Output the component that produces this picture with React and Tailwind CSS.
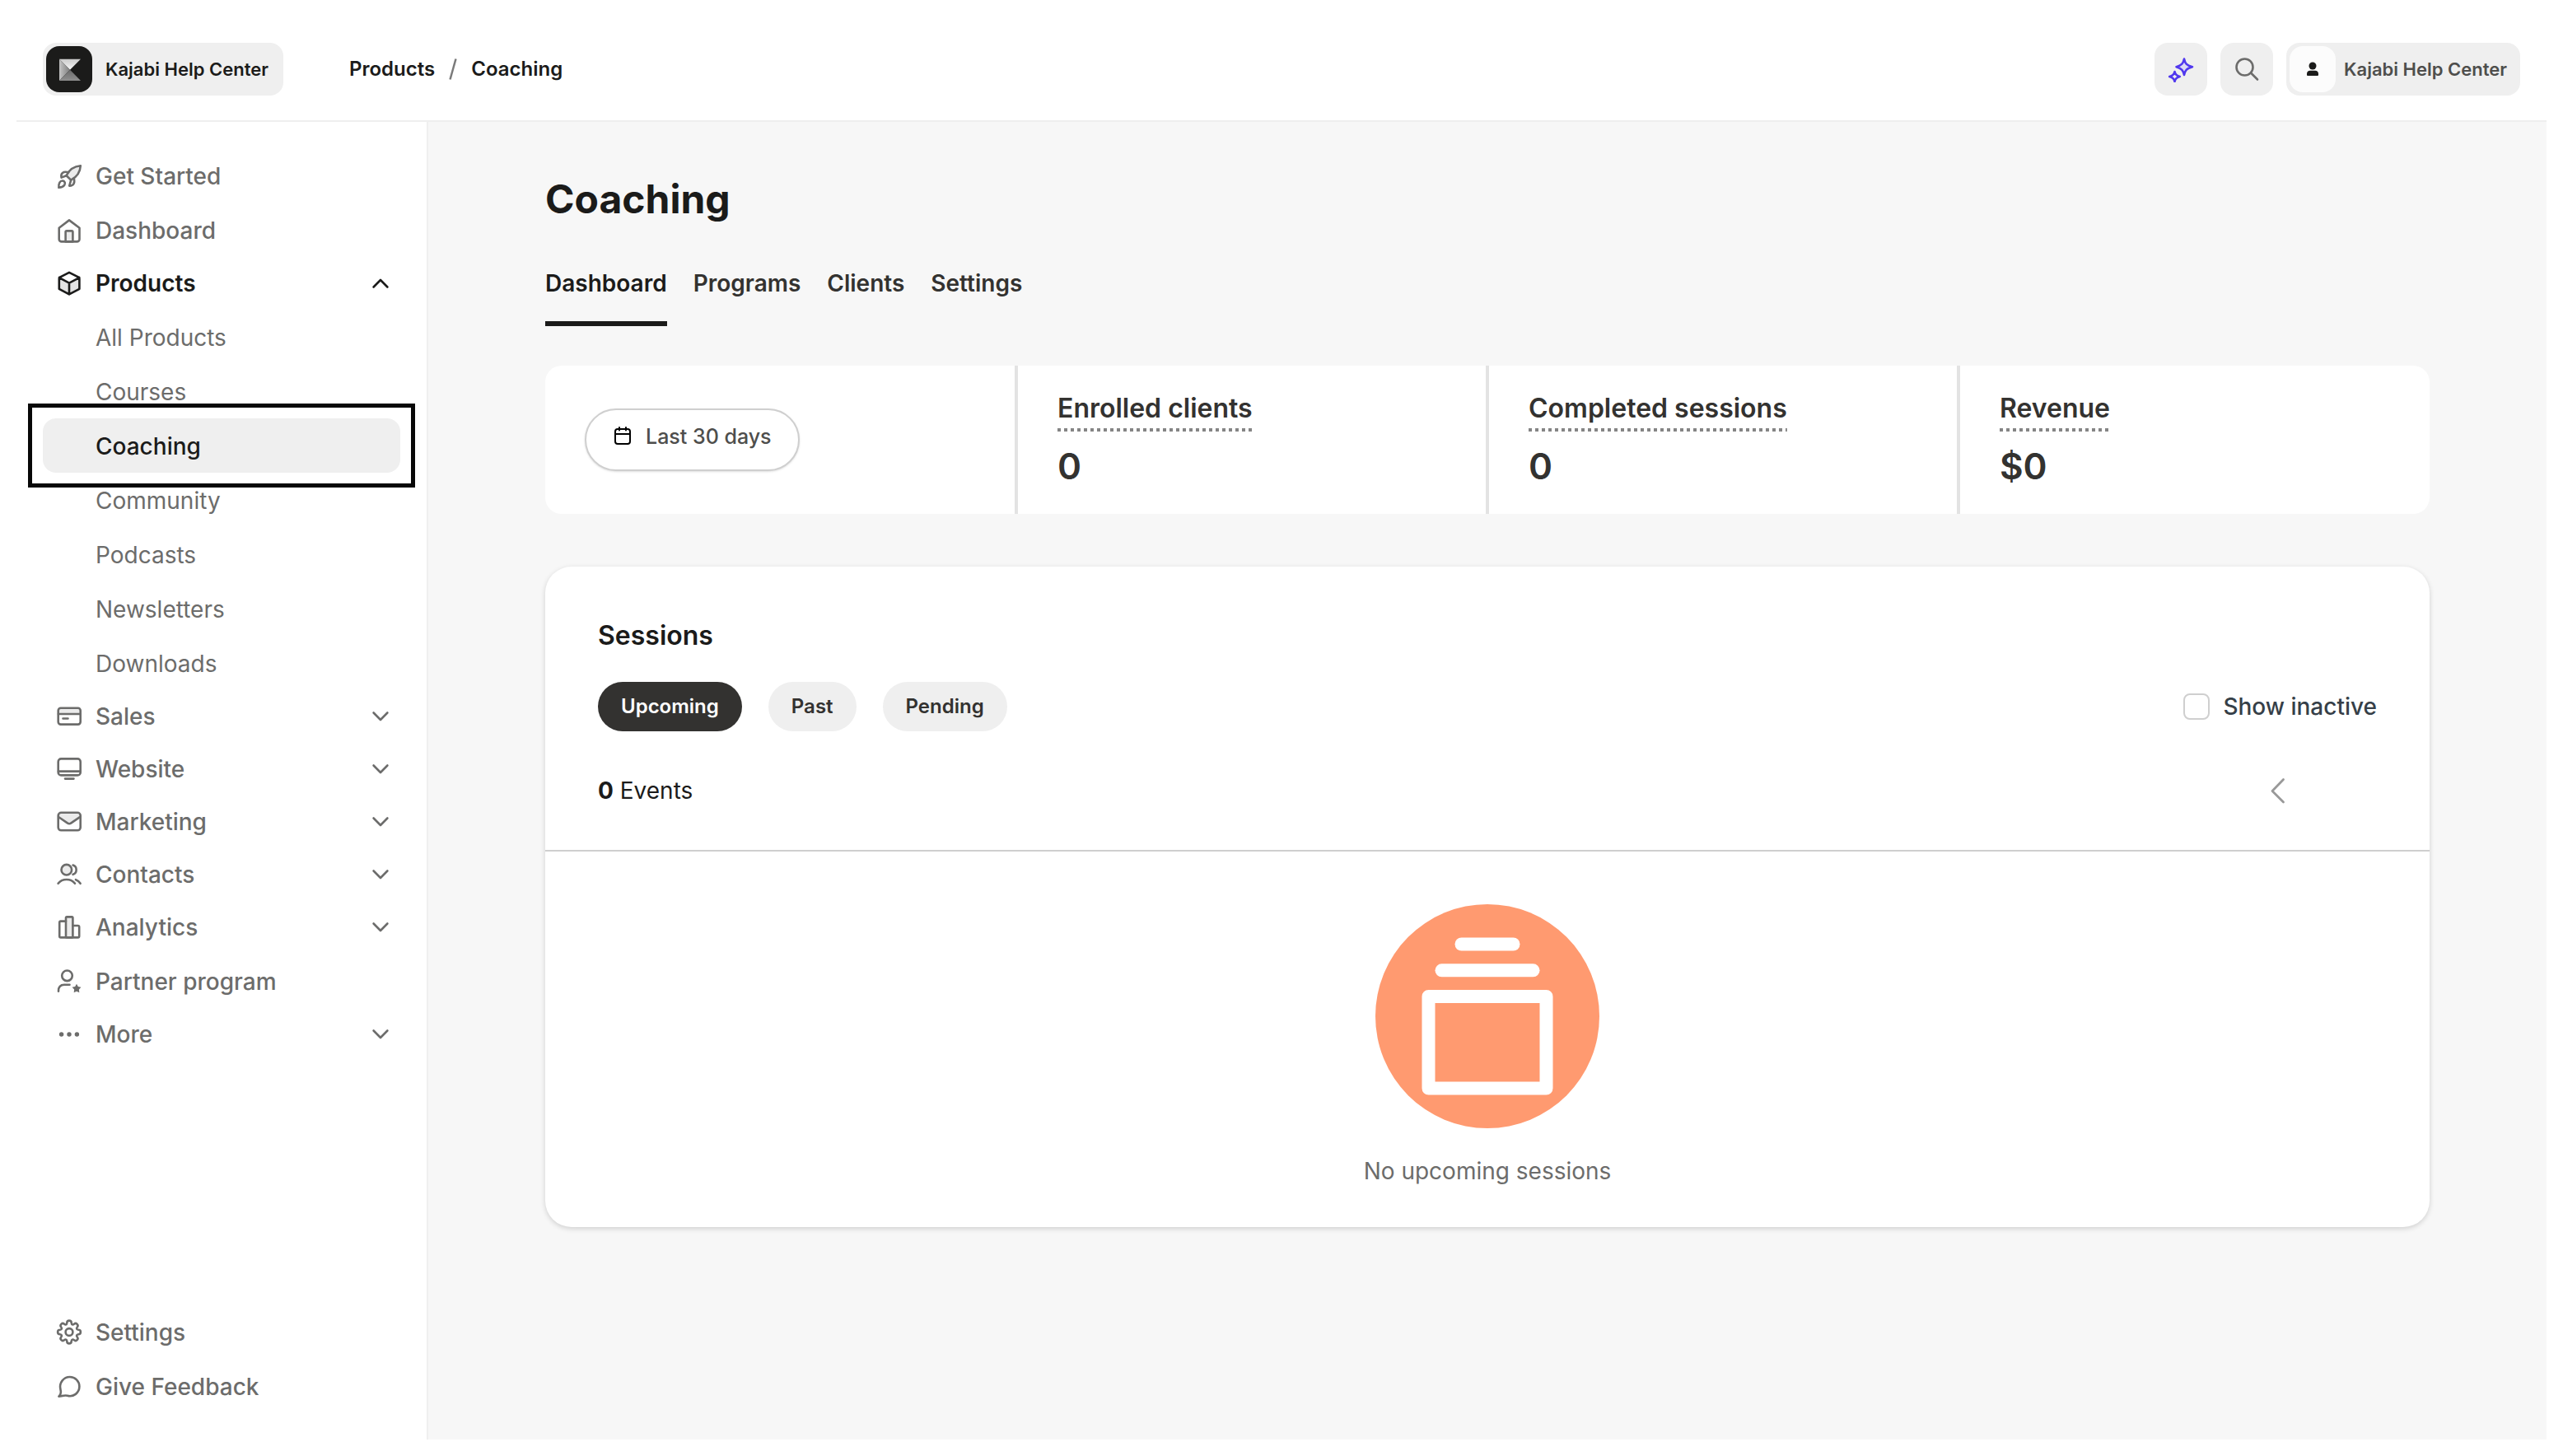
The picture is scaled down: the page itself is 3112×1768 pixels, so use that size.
import React, { useState } from "react";

function Icon({ children, className = "" }) {
  return (
    <svg
      viewBox="0 0 32 32"
      aria-hidden="true"
      className={`size-8 shrink-0 ${className}`}
      fill="none"
      stroke="currentColor"
      strokeWidth="2.6"
      strokeLinecap="round"
      strokeLinejoin="round"
    >
      {children}
    </svg>
  );
}

const TINT = "#ebebeb";

const icons = {
  rocket: (
    <Icon>
      <path d="M12.6 15.2C16 8.2 21.600 3.800 29.800 3.200C29.400 11.400 25.200 16.800 18.200 20.600Z" fill={TINT} />
      <path d="M12.600 15.200L6.600 17.600C5.400 12.600 8.400 9.600 15.200 11.200" />
      <path d="M18.200 20.600L16.200 27.600C21.200 27.800 23.200 24.600 21.800 18.400" />
      <path d="M3.400 29.800C3 24.600 4.800 21.200 8.400 21.600C10.800 22.200 11.600 24.600 10.200 26.800C8.800 28.800 6.400 29.600 3.400 29.800Z" />
    </Icon>
  ),
  home: (
    <Icon>
      <path d="M11.600 29.400V17.800a1.400 1.400 0 0 1 1.400-1.400h6a1.400 1.400 0 0 1 1.400 1.400V29.400Z" fill={TINT} />
      <path d="M3.700 12.800L16 3.400L28.500 12.800V26.400a3 3 0 0 1-3 3H6.700a3 3 0 0 1-3-3Z" />
    </Icon>
  ),
  box: (
    <Icon>
      <path d="M3.800 9.600L16 16V29.400L3.800 23Z M28.400 9.600L16 16V29.400L28.400 23Z" fill="#e3e3e3" stroke="none" />
      <path d="M16 2.800L28.400 9.200V22.800L16 29.400L3.800 22.800V9.200Z M3.800 9.200L16 15.600L28.400 9.200M16 15.600V29.400" />
    </Icon>
  ),
  card: (
    <Icon>
      <path d="M3 13V8.500a2.500 2.500 0 0 1 2.500-2.500h22a2.500 2.500 0 0 1 2.500 2.500V13Z" fill={TINT} stroke="none" />
      <rect x="2.700" y="5.800" width="27" height="19.800" rx="3" />
      <path d="M3 13H29.500M8.500 18.500H14.500" />
    </Icon>
  ),
  monitor: (
    <Icon>
      <rect x="2.700" y="3.400" width="27" height="20" rx="3.500" />
      <path d="M3 18.600H29.500M11 27.600H21.500" />
    </Icon>
  ),
  mail: (
    <Icon>
      <path d="M3.500 9.500V8a3 3 0 0 1 3-3h19a3 3 0 0 1 3 3v1.500L18 17.500a3.500 3.500 0 0 1-4 0Z" fill={TINT} stroke="none" />
      <rect x="2.700" y="4.800" width="27" height="21.500" rx="3.500" />
      <path d="M3.400 10.200L13.800 17.400a4 4 0 0 0 4.600 0L29 10.200" />
    </Icon>
  ),
  people: (
    <Icon>
      <circle cx="12.800" cy="10.200" r="6.300" fill={TINT} />
      <path d="M2.600 26.800C7.600 20.400 18 20.400 23 26.800M20.600 4.600C26 6.400 26 14 20.600 15.800M24 22.200C26.400 23 28.200 24.600 29.600 26.800" />
    </Icon>
  ),
  bars: (
    <Icon>
      <rect x="12" y="3.400" width="8.400" height="25" rx="1.200" fill={TINT} />
      <path d="M12 8.600H5.800A1.600 1.600 0 0 0 4.200 10.200V26.800A1.600 1.600 0 0 0 5.800 28.400H26.600A1.600 1.600 0 0 0 28.200 26.800V15.600A1.600 1.600 0 0 0 26.600 14H20.400" />
    </Icon>
  ),
  partner: (
    <Icon>
      <circle cx="13.500" cy="8.800" r="6.300" />
      <path d="M3 27.600C2.600 22.600 5.400 19.800 10 19.800H16.500" />
      <path d="M25 18.800L26.800 22L30.400 22.800L27.900 25.500L28.300 29.300L25 27.800L21.700 29.300L22.100 25.500L19.600 22.800L23.200 22Z" fill="currentColor" stroke="none" />
    </Icon>
  ),
  dots: (
    <Icon>
      <g fill="currentColor" stroke="none">
        <circle cx="6.600" cy="16" r="2.700" />
        <circle cx="16" cy="16" r="2.700" />
        <circle cx="25.400" cy="16" r="2.700" />
      </g>
    </Icon>
  ),
  gear: (
    <Icon>
      <circle cx="16" cy="15.500" r="4.400" />
      <path d="M13.300 4.300A2.700 2.700 0 0 1 18.700 4.300C19 6.600 20.400 7 22 5.700A2.700 2.700 0 0 1 25.800 9.500C24.500 11.100 24.900 12.500 27.200 12.800A2.700 2.700 0 0 1 27.200 18.200C24.900 18.500 24.500 19.900 25.800 21.500A2.700 2.700 0 0 1 22 25.300C20.400 24 19 24.400 18.700 26.700A2.700 2.700 0 0 1 13.300 26.700C13 24.400 11.600 24 10 25.300A2.700 2.700 0 0 1 6.200 21.500C7.500 19.900 7.100 18.500 4.800 18.200A2.700 2.700 0 0 1 4.800 12.800C7.100 12.500 7.500 11.100 6.200 9.500A2.700 2.700 0 0 1 10 5.700C11.600 7 13 6.600 13.300 4.300Z" />
    </Icon>
  ),
  chat: (
    <Icon>
      <path d="M3.400 27.600C5.600 25.600 6.400 22.600 5.400 18.800C3.600 11.400 9 4 16.800 4C23.200 4 28.400 9 28.400 15.600C28.400 23.400 21.200 28.800 13.800 26.800C10.600 26 7 27.200 3.400 27.600Z" />
    </Icon>
  ),
};

function Chevron({ up }) {
  return (
    <svg
      viewBox="0 0 24 24"
      aria-hidden="true"
      className="ml-auto size-6 shrink-0"
      fill="none"
      stroke="currentColor"
      strokeWidth="2.6"
      strokeLinecap="round"
      strokeLinejoin="round"
    >
      <path d={up ? "M3.600 16.500L12 8L20.400 16.500" : "M3.600 7.500L12 16L20.400 7.500"} />
    </svg>
  );
}

const rowBase = "flex w-full items-center gap-4 rounded-2xl pl-4 pr-3 text-left text-[28px] leading-8";

function NavLink({ icon, label }) {
  return (
    <a href="#" className={`${rowBase} h-[66px] pt-0.5 font-medium`}>
      {icons[icon]}
      {label}
    </a>
  );
}

function NavGroup({ icon, label, open }) {
  return (
    <button
      type="button"
      aria-expanded={!!open}
      className={`${rowBase} h-16 ${open ? "font-semibold text-[#1b1b1a]" : "font-medium"}`}
    >
      {icons[icon]}
      {label}
      <Chevron up={open} />
    </button>
  );
}

function SubLink({ label, active }) {
  return (
    <a
      href="#"
      aria-current={active ? "page" : undefined}
      className={
        active
          ? "relative flex h-[66px] items-center rounded-2xl bg-[#efefef] pt-0.5 pl-16 text-[28px] leading-8 font-medium text-[#1b1b1a]"
          : "flex h-[66px] items-center rounded-2xl pt-0.5 pl-16 text-[28px] leading-8"
      }
    >
      {label}
      {active && <span className="pointer-events-none absolute -inset-[18px] border-[5px] border-[#080808]" />}
    </a>
  );
}

function Header() {
  return (
    <header className="flex h-32 items-center border-b-2 border-[#efefef] px-8 pt-0.5">
      <a
        href="#"
        className="flex h-16 w-[292px] items-center gap-4 rounded-2xl bg-[#efefef] pl-1 text-[22px] leading-8 font-semibold whitespace-nowrap text-[#1b1b1a]"
      >
        <svg viewBox="0 0 56 56" className="size-14 shrink-0" aria-hidden="true">
          <defs>
            <linearGradient id="k-top" x1="0" y1="0" x2="0" y2="1">
              <stop offset="0" stopColor="#c9c9c9" />
              <stop offset="1" stopColor="#f7f7f7" />
            </linearGradient>
            <linearGradient id="k-left" x1="0" y1="0" x2="1" y2="0">
              <stop offset="0" stopColor="#c4c4c4" />
              <stop offset="1" stopColor="#7d7d7d" />
            </linearGradient>
            <linearGradient id="k-bottom" x1="0" y1="0" x2="0" y2="1">
              <stop offset="0" stopColor="#6a6a6a" />
              <stop offset="1" stopColor="#8f8f8f" />
            </linearGradient>
          </defs>
          <rect width="56" height="56" rx="16" fill="#1b1b1a" />
          <path d="M16 15.700H42L29 28.700Z" fill="url(#k-top)" />
          <path d="M16 15.700L29 28.700L16 42Z" fill="url(#k-left)" />
          <path d="M16 42L29 28.700L42 42Z" fill="url(#k-bottom)" />
        </svg>
        Kajabi Help Center
      </a>
      <nav
        aria-label="Breadcrumb"
        className="ml-20 flex items-center gap-4 text-2xl font-semibold text-[#1b1b1a]"
      >
        <a href="#">Products</a>
        <svg viewBox="0 0 12 26" className="h-[26px] w-3" stroke="#7a7a7a" strokeWidth="2.500" aria-hidden="true">
          <path d="M2.500 25.500L9.500 0.500" />
        </svg>
        <a href="#">Coaching</a>
      </nav>
      <div className="ml-auto flex gap-4">
        <button type="button" aria-label="Assistant" className="grid size-16 place-items-center rounded-2xl bg-[#efefef] text-[#5138ee]">
          <Icon>
            <path d="M20 3.500C21.200 9 22.500 11 30 13.200C22.500 15.200 21.200 17.500 20 23C18.800 17.500 17.200 15.200 10.500 13.200C17.200 11 18.800 9 20 3.500Z" fill="#dcd9f5" />
            <path d="M8.500 19C9.200 22.500 11 24 14.800 25C11 26 9.200 27.500 8.500 31C7.800 27.500 6 26 2.200 25C6 24 7.800 22.500 8.500 19Z" />
          </Icon>
        </button>
        <button type="button" aria-label="Search" className="grid size-16 place-items-center rounded-2xl bg-[#efefef] text-[#6c6c6b]">
          <Icon>
            <circle cx="13.500" cy="13.500" r="10" />
            <path d="M21 20.500L29 28.500" />
          </Icon>
        </button>
        <button
          type="button"
          className="flex h-16 items-center gap-2.5 rounded-2xl bg-[#efefef] pr-4 pl-1 text-[22px] leading-8 font-semibold whitespace-nowrap text-[#4e4e4c]"
        >
          <span className="grid size-14 place-items-center rounded-2xl bg-[#fcfcfc]">
            <svg viewBox="0 0 16 18" className="h-[18px] w-4" fill="#1b1b1a" aria-hidden="true">
              <circle cx="8" cy="5" r="4.500" />
              <path d="M1 16V14.500A4 4 0 0 1 5 10.800H11A4 4 0 0 1 15 14.500V16A1 1 0 0 1 14 17H2A1 1 0 0 1 1 16Z" />
            </svg>
          </span>
          Kajabi Help Center
        </button>
      </div>
    </header>
  );
}

const products = ["All Products", "Courses", "Coaching", "Community", "Podcasts", "Newsletters", "Downloads"];

function Sidebar() {
  return (
    <aside className="flex w-[500px] shrink-0 flex-col justify-between border-r-2 border-[#efefef] px-8 py-8 text-[#6c6c6b]">
      <nav aria-label="Main">
        <NavLink icon="rocket" label="Get Started" />
        <NavLink icon="home" label="Dashboard" />
        <NavGroup icon="box" label="Products" open />
        {products.map((p) => (
          <SubLink key={p} label={p} active={p === "Coaching"} />
        ))}
        <NavGroup icon="card" label="Sales" />
        <NavGroup icon="monitor" label="Website" />
        <NavGroup icon="mail" label="Marketing" />
        <NavGroup icon="people" label="Contacts" />
        <NavGroup icon="bars" label="Analytics" />
        <NavLink icon="partner" label="Partner program" />
        <NavGroup icon="dots" label="More" />
      </nav>
      <nav aria-label="Support">
        <NavLink icon="gear" label="Settings" />
        <NavLink icon="chat" label="Give Feedback" />
      </nav>
    </aside>
  );
}

function Stat({ label, value }) {
  return (
    <div className="-ml-0.5 border-l-4 border-[#e3e3e3] pt-8 pl-12 font-semibold text-[#333230]">
      <div>
        <span className="inline-block bg-[repeating-linear-gradient(to_right,#858585_0_4px,transparent_4px_8px)] bg-[length:100%_4px] bg-bottom bg-no-repeat pb-2 text-[32px] leading-10">
          {label}
        </span>
      </div>
      <p className="mt-4 text-[44px] leading-[52px]">{value}</p>
    </div>
  );
}

function Stats() {
  return (
    <section aria-label="Summary" className="mt-12 grid h-[180px] grid-cols-4 overflow-hidden rounded-[20px] bg-white">
      <div className="flex items-center pl-12">
        <button
          type="button"
          className="flex h-[76px] items-center gap-4 rounded-full border-2 border-[#cfcfcf] bg-white pr-8 pb-2 pl-8 text-[25px] leading-8 font-medium text-[#4e4e4c] shadow-sm"
        >
          <svg viewBox="0 0 24 24" className="size-6" fill="none" stroke="#000" strokeWidth="2" strokeLinecap="round" aria-hidden="true">
            <rect x="3" y="3" width="18" height="18" rx="3" />
            <path d="M3 9H21M8 1V4.500M16 1V4.500" />
          </svg>
          Last 30 days
        </button>
      </div>
      <Stat label="Enrolled clients" value="0" />
      <Stat label="Completed sessions" value="0" />
      <Stat label="Revenue" value="$0" />
    </section>
  );
}

function Sessions() {
  const [filter, setFilter] = useState("Upcoming");
  const [inactive, setInactive] = useState(false);
  return (
    <section className="mt-16 rounded-[32px] bg-white shadow-[0_2px_6px_rgba(0,0,0,0.16)]">
      <div className="border-b-2 border-[#cfcfcf] px-16 pt-16 pb-[52px]">
        <h2 className="text-[32px] leading-10 font-semibold text-[#1b1b1a]">Sessions</h2>
        <div className="mt-9 flex items-center justify-between">
          <div className="flex gap-8">
            {["Upcoming", "Past", "Pending"].map((f) => (
              <button
                key={f}
                type="button"
                aria-pressed={filter === f}
                onClick={() => setFilter(f)}
                className={`h-[60px] rounded-full px-7 text-2xl font-semibold ${
                  filter === f ? "bg-[#333230] text-white" : "bg-[#efefef] text-[#333230]"
                }`}
              >
                {f}
              </button>
            ))}
          </div>
          <label className="flex items-center gap-4 text-[28px] leading-8 font-medium text-[#363f48]">
            <input
              type="checkbox"
              checked={inactive}
              onChange={(e) => setInactive(e.target.checked)}
              className="size-8 appearance-none rounded-lg border-2 border-[#cfcfcf] bg-white checked:bg-[#333230]"
            />
            Show inactive
          </label>
        </div>
        <div className="mt-[52px] flex items-center justify-between">
          <p className="text-[28px] leading-10 text-[#1b1b1a]">
            <strong className="font-bold">0</strong> Events
          </p>
          <button type="button" aria-label="Previous page" className="mr-[104px]">
            <svg viewBox="0 0 32 32" className="size-8" fill="none" stroke="#999" strokeWidth="2.800" strokeLinecap="round" strokeLinejoin="round" aria-hidden="true">
              <path d="M22.500 2.500L9 16.500L22.500 30" />
            </svg>
          </button>
        </div>
      </div>
      <div className="flex flex-col items-center pt-16 pb-12">
        <svg viewBox="0 0 272 272" className="size-[272px]" aria-hidden="true">
          <circle cx="136" cy="136" r="136" fill="#ff9a70" />
          <g fill="#fff">
            <rect x="96.500" y="40.500" width="79" height="16" rx="8" />
            <rect x="72.500" y="72.300" width="127" height="16" rx="8" />
            <path fillRule="evenodd" d="M64.500 104H207.500A8 8 0 0 1 215.500 112V223.500A8 8 0 0 1 207.500 231.500H64.500A8 8 0 0 1 56.500 223.500V112A8 8 0 0 1 64.500 104ZM72.500 120V215.500H199.500V120Z" />
          </g>
        </svg>
        <p className="mt-8 text-[28px] leading-10 text-[#6c6c6b]">No upcoming sessions</p>
      </div>
    </section>
  );
}

export default function App() {
  return (
    <div className="flex min-h-screen flex-col bg-white p-5 font-['Inter',sans-serif]">
      <Header />
      <div className="flex grow">
        <Sidebar />
        <main className="grow bg-[#f7f7f7] px-[142px] pt-[62px] pb-16">
          <h1 className="text-[48px] leading-[64px] font-bold text-[#1b1b1a]">Coaching</h1>
          <nav aria-label="Coaching sections" className="mt-[38px] flex gap-8 text-[28px] leading-10 font-semibold text-[#333230]">
            <a href="#" aria-current="page" className="border-b-6 border-[#1b1b1a] pt-3 pb-[26px] text-[#1b1b1a]">
              Dashboard
            </a>
            <a href="#" className="pt-3">Programs</a>
            <a href="#" className="pt-3">Clients</a>
            <a href="#" className="pt-3">Settings</a>
          </nav>
          <Stats />
          <Sessions />
        </main>
      </div>
    </div>
  );
}
